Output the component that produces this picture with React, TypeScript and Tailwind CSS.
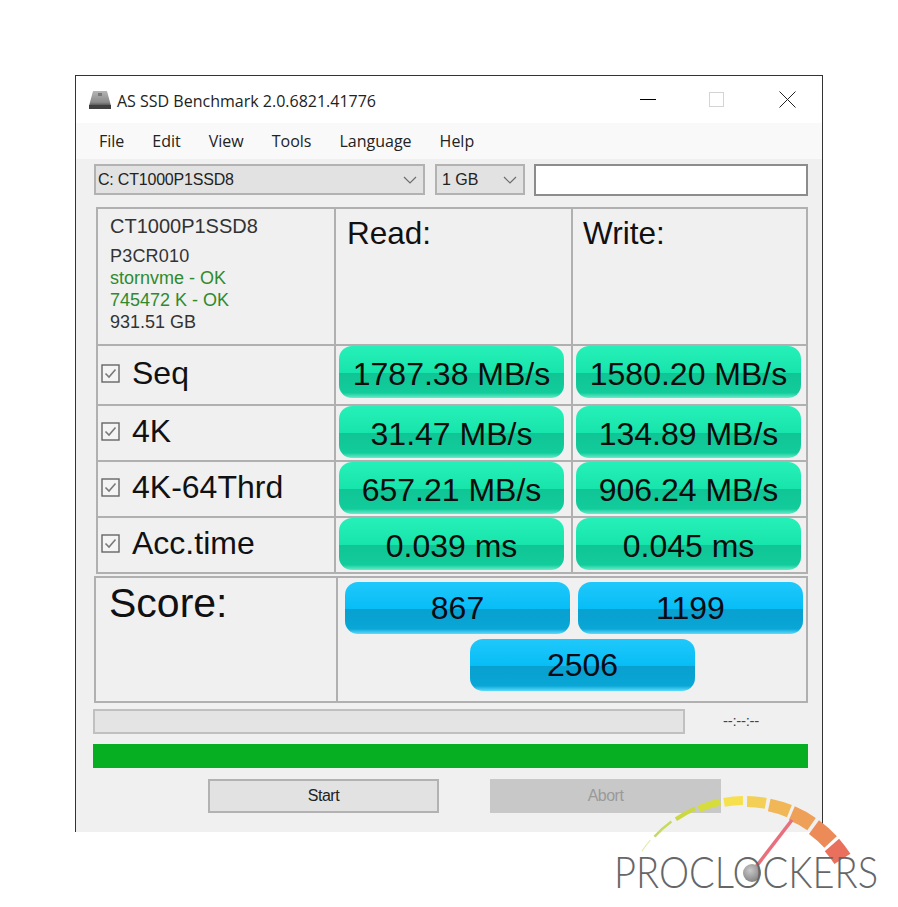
import { ReactNode } from "react";

// Gauge segments of the logo: angles from vertical, colour and thickness
const gaugeSegments = [
  { from: -56, to: -49.5, width: 1, color: "#e3e9ad" },
  { from: -47, to: -36.5, width: 2.5, color: "#c6da62" },
  { from: -34.2, to: -24, width: 4, color: "#cbd843" },
  { from: -22.4, to: -11.7, width: 7, color: "#d5dc3c" },
  { from: -10, to: -1, width: 9, color: "#f6e04e" },
  { from: 1, to: 10, width: 11, color: "#f3cf55" },
  { from: 11.8, to: 22, width: 13, color: "#f1b656" },
  { from: 23.5, to: 34.5, width: 15, color: "#ee9f58" },
  { from: 36.3, to: 47.3, width: 17, color: "#ec8b57" },
  { from: 48.8, to: 57.5, width: 19, color: "#e9705c" },
];

function arcPath(from: number, to: number, width: number) {
  const cx = 145;
  const cy = 141;
  const outer = 125;
  const inner = outer - width;
  const pt = (r: number, deg: number) => {
    const a = (deg * Math.PI) / 180;
    return `${(cx + r * Math.sin(a)).toFixed(2)} ${(cy - r * Math.cos(a)).toFixed(2)}`;
  };
  return `M${pt(outer, from)} A${outer} ${outer} 0 0 1 ${pt(outer, to)} L${pt(inner, to)} A${inner} ${inner} 0 0 0 ${pt(inner, from)} Z`;
}

function DriveIcon() {
  return (
    <svg width="24" height="20" viewBox="0 0 24 20">
      <defs>
        <linearGradient id="drive" x1="0" y1="0" x2="0" y2="1">
          <stop offset="0" stopColor="#b5b5b5" />
          <stop offset="0.75" stopColor="#8a8a8a" />
          <stop offset="1" stopColor="#4a4a4a" />
        </linearGradient>
      </defs>
      <path d="M5 1h14l4 15H1z" fill="url(#drive)" />
      <rect x="1" y="15" width="22" height="4" fill="#3f3f3f" />
      <rect x="10" y="3" width="4" height="3" fill="#777" />
    </svg>
  );
}

function Chevron() {
  return (
    <svg width="14" height="8" viewBox="0 0 14 8" fill="none" stroke="#6d6d6d" strokeWidth="1.2">
      <path d="M1 1l6 6 6-6" />
    </svg>
  );
}

function CheckIcon() {
  return (
    <svg width="19" height="19" viewBox="0 0 19 19" fill="none">
      <rect x="1" y="1" width="17" height="17" stroke="#666" strokeWidth="1.4" fill="#f4f4f4" />
      <path d="M4.5 9.5l3.5 3.5 6.5-7.5" stroke="#7a7a7a" strokeWidth="1.6" />
    </svg>
  );
}

function GreenPill({ children }: { children: ReactNode }) {
  return (
    <div className="flex h-[52px] w-[225px] items-center justify-center rounded-[13px] bg-[linear-gradient(to_bottom,#25f0b9_0%,#17e4aa_52%,#10c595_52%,#12cc9b_90%,#6aeccb_100%)] pt-[3px] text-[32px] text-[#0c0c0c]">
      {children}
    </div>
  );
}

function BluePill({ children }: { children: ReactNode }) {
  return (
    <div className="flex h-[52px] w-[225px] items-center justify-center rounded-[13px] bg-[linear-gradient(to_bottom,#1fc8fb_0%,#07bdf6_52%,#08a0cf_52%,#09a6d6_90%,#5fdcfb_100%)] text-[32px] text-[#0a0a14]">
      {children}
    </div>
  );
}

const results = [
  { name: "Seq", read: "1787.38 MB/s", write: "1580.20 MB/s", height: "h-[60px]" },
  { name: "4K", read: "31.47 MB/s", write: "134.89 MB/s", height: "h-[56px]" },
  { name: "4K-64Thrd", read: "657.21 MB/s", write: "906.24 MB/s", height: "h-[56px]" },
  { name: "Acc.time", read: "0.039 ms", write: "0.045 ms", height: "h-[56px]" },
];

const menus = ["File", "Edit", "View", "Tools", "Language", "Help"];

export default function App() {
  return (
    <div className="relative h-[907px] w-[898px] overflow-hidden bg-white pl-[75px] pt-[75px] font-['Liberation_Sans',sans-serif] text-[#111]">
      <div className="h-[757px] w-[748px] border-x border-t border-[#333] bg-[#f0f0f0]">
        {/* Title bar */}
        <div className="flex h-[47px] items-center bg-white pl-[12px]">
          <DriveIcon />
          <span className="ml-[5px] mt-[2px] font-['Open_Sans',sans-serif] text-[16px] text-[#222]">
            AS SSD Benchmark 2.0.6821.41776
          </span>
          <div className="ml-auto flex items-center">
            <div className="h-px w-[16px] bg-black" />
            <div className="ml-[53px] h-[15px] w-[15px] border border-[#d4d4d4]" />
            <svg className="ml-[55px] mr-[26px]" width="17" height="17" viewBox="0 0 17 17" stroke="#222" strokeWidth="1">
              <path d="M0.5 0.5l16 16M16.5 0.5l-16 16" />
            </svg>
          </div>
        </div>

        {/* Menu bar */}
        <div className="flex h-[36px] items-center gap-[28px] bg-[#f9f9f9] pl-[23px] font-['Open_Sans',sans-serif] text-[16px] text-[#222]">
          {menus.map((menu) => (
            <span key={menu}>{menu}</span>
          ))}
        </div>

        {/* Drive selector */}
        <div className="ml-[18px] mt-[5px] flex h-[32px] text-[16px] text-[#222]">
          <div className="flex h-[31px] w-[331px] items-center justify-between border-2 border-[#b2b2b2] bg-[#e2e2e2] pl-[2px] pr-[6px]">
            <span className="tracking-[-0.2px]">C: CT1000P1SSD8</span>
            <Chevron />
          </div>
          <div className="ml-[10px] flex h-[31px] w-[90px] items-center justify-between border-2 border-[#b2b2b2] bg-[#e2e2e2] pl-[5px] pr-[6px]">
            <span>1 GB</span>
            <Chevron />
          </div>
          <div className="ml-[9px] h-[32px] w-[274px] border-2 border-[#8c8c8c] bg-white" />
        </div>

        {/* Results table */}
        <div className="ml-[20px] mt-[11px] w-[712px] border-b-2 border-r-2 border-[#b0b0b0]">
          <div className="grid h-[137px] grid-cols-[238px_237px_237px]">
            <div className="border-l-2 border-t-2 border-[#b0b0b0] pl-[12px] pt-[3px] text-[18px] leading-[22px]">
              <div className="text-[20px] leading-[28px] text-[#333]">CT1000P1SSD8</div>
              <div className="mt-[5px] tracking-[0.2px] text-[#333]">P3CR010</div>
              <div className="text-[#2f8a2f]">stornvme - OK</div>
              <div className="text-[#2f8a2f]">745472 K - OK</div>
              <div className="text-[#333]">931.51 GB</div>
            </div>
            <div className="border-l-2 border-t-2 border-[#b0b0b0] pl-[11px] pt-[1px] text-[31.5px]">Read:</div>
            <div className="border-l-2 border-t-2 border-[#b0b0b0] pl-[10px] pt-[1px] text-[31.5px]">Write:</div>
          </div>
          {results.map((row) => (
            <div key={row.name} className={`grid grid-cols-[238px_237px_237px] ${row.height}`}>
              <div className="flex items-center border-l-2 border-t-2 border-[#b0b0b0] pb-[4px] pl-[3px] text-[32px]">
                <CheckIcon />
                <span className="ml-[12px]">{row.name}</span>
              </div>
              <div className="border-l-2 border-t-2 border-[#b0b0b0] pl-[3px]">
                <GreenPill>{row.read}</GreenPill>
              </div>
              <div className="border-l-2 border-t-2 border-[#b0b0b0] pl-[3px]">
                <GreenPill>{row.write}</GreenPill>
              </div>
            </div>
          ))}
        </div>

        {/* Score */}
        <div className="ml-[18px] mt-[2px] grid h-[127px] w-[714px] grid-cols-[240px_1fr] border-2 border-[#b0b0b0]">
          <div className="pl-[13px] text-[41px] leading-[50px]">Score:</div>
          <div className="border-l-2 border-[#b0b0b0] pl-[7px] pt-[4px]">
            <div className="flex gap-[8px]">
              <BluePill>867</BluePill>
              <BluePill>1199</BluePill>
            </div>
            <div className="ml-[125px] mt-[5px]">
              <BluePill>2506</BluePill>
            </div>
          </div>
        </div>

        {/* Progress */}
        <div className="ml-[17px] mt-[6px] flex h-[25px] items-center">
          <div className="h-[25px] w-[592px] border-2 border-[#c0c0c0] bg-[#e4e4e4]" />
          <span className="ml-[38px] text-[15px] tracking-[-0.3px] text-[#444]">--:--:--</span>
        </div>
        <div className="ml-[17px] mt-[10px] h-[24px] w-[715px] bg-[#06ae22]" />

        {/* Buttons */}
        <div className="ml-[132px] mt-[11px] flex gap-[51px] text-[16px] tracking-[-0.5px]">
          <button className="h-[34px] w-[231px] border-2 border-[#b2b2b2] bg-[#e2e2e2] text-[#222]">Start</button>
          <button className="h-[34px] w-[231px] bg-[#c8c8c8] text-[#9a9a9a]">Abort</button>
        </div>
      </div>

      {/* ProClockers logo over the window corner */}
      <svg className="absolute left-[600px] top-[780px]" width="298" height="127" viewBox="0 0 298 127">
        <defs>
          <radialGradient id="ball" cx="0.4" cy="0.35" r="0.7">
            <stop offset="0" stopColor="#c9c9c9" />
            <stop offset="1" stopColor="#808080" />
          </radialGradient>
        </defs>
        {gaugeSegments.map((s) => (
          <path key={s.from} d={arcPath(s.from, s.to, s.width)} fill={s.color} />
        ))}
        <path d="M155 88L192 40" stroke="#e8707c" strokeWidth="3.5" />
        <circle cx="152" cy="93" r="9" fill="url(#ball)" />
        <text
          x="14"
          y="108"
          textLength="264"
          lengthAdjust="spacingAndGlyphs"
          fontFamily="Lato, 'Open Sans', sans-serif"
          fontWeight="300"
          fontSize="43"
          fill="#666"
        >
          PROCLOCKERS
        </text>
      </svg>
    </div>
  );
}
